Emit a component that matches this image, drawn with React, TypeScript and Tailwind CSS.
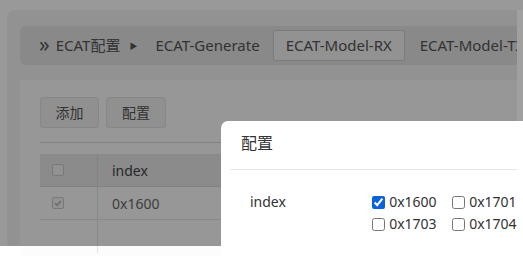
import React from 'react';

const FONT = { fontFamily: '"Noto Sans", "Noto Sans CJK SC", sans-serif' };

function Crumbs() {
  return (
    <div className="flex items-center h-[39px] bg-[#e4e4e4] rounded-l-[6px] pl-[19px] text-[15px] text-[#555] whitespace-nowrap overflow-hidden">
      <span className="text-[21px] leading-none mr-[6px] -mt-[3px]">»</span>
      <span>ECAT配置</span>
      <span className="ml-[9px] text-[8px]">▶</span>
      <span className="ml-[18px]">ECAT-Generate</span>
      <span className="ml-[13px] h-[31px] px-[12px] flex items-center bg-[#f3f3f3] border border-[#cdcdcd] rounded-[2px]">
        ECAT-Model-RX
      </span>
      <span className="ml-[15px]">ECAT-Model-TX</span>
    </div>
  );
}

function Check({ checked }: { checked?: boolean }) {
  return (
    <div className="w-[12px] h-[12px] rounded-[2px] border border-[#c8c8c8] bg-[#f4f4f4] flex items-center justify-center">
      {checked && (
        <svg viewBox="0 0 12 12" className="w-[10px] h-[10px]">
          <path d="M2.5 6.2 5 8.6 9.5 3.6" fill="none" stroke="#b0b0b0" strokeWidth="1.8" />
        </svg>
      )}
    </div>
  );
}

function Opt({ label, checked }: { label: string; checked?: boolean }) {
  return (
    <label className="flex items-center gap-[4px] w-[80px]">
      <input type="checkbox" defaultChecked={checked} className="w-[13px] h-[13px] m-0 accent-[#0a64d8]" />
      <span>{label}</span>
    </label>
  );
}

export default function App() {
  return (
    <div className="relative w-[523px] h-[256px] overflow-hidden bg-white" style={FONT}>
      {/* page under the mask */}
      <div className="h-[246px] pt-[10px] pl-[7px] bg-white">
        <div className="h-full bg-[#f3f3f3] rounded-tl-[8px] pt-[16px] pl-[13px]">
          <Crumbs />
          <div className="mt-[15px] h-full bg-[#fcfcfc] pl-[20px] pt-[17px]">
            <div className="flex gap-[7px] text-[14px] text-[#555]">
              <button className="w-[59px] h-[31px] bg-[#f0f0f0] border border-[#e2e2e2] rounded-[3px]">添加</button>
              <button className="w-[60px] h-[31px] bg-[#f0f0f0] border border-[#e2e2e2] rounded-[3px]">配置</button>
            </div>
            <div className="mt-[14px] h-px bg-[#d9d9d9]" />
            <div className="mt-[11px] text-[14px] text-[#444]">
              <div className="flex h-[33px] bg-[#e8e8e8] border-b border-[#d9d9d9]">
                <div className="w-[58px] flex items-center pl-[12px] border-r border-[#d9d9d9]">
                  <Check />
                </div>
                <div className="flex items-center pl-[14px]">index</div>
              </div>
              <div className="flex h-[33px] border-b border-[#e3e3e3] text-[#666]">
                <div className="w-[58px] flex items-center pl-[12px] border-r border-[#e3e3e3]">
                  <Check checked />
                </div>
                <div className="flex items-center pl-[14px]">0x1600</div>
              </div>
              <div className="flex h-[33px]">
                <div className="w-[58px] border-r border-[#e3e3e3]" />
              </div>
            </div>
          </div>
        </div>
      </div>

      {/* mask */}
      <div className="absolute left-0 top-0 w-[523px] h-[246px] bg-black/40" />
      <div className="absolute left-[517px] top-[10px] w-[6px] h-[111px] bg-[#a0a0a0]" />

      {/* dialog */}
      <div className="absolute left-[221px] top-[121px] w-[320px] h-[160px] bg-white rounded-tl-[7px] text-[#333]">
        <div className="pl-[20px] pt-[10px] text-[16px] h-[48px]">配置</div>
        <div className="ml-[9px] w-[287px] h-px bg-[#e8e8e8]" />
        <div className="flex pt-[22px] pl-[29px] text-[14px]">
          <div className="w-[123px] leading-[20px]">index</div>
          <div className="flex flex-wrap w-[170px] gap-y-[2px] leading-[20px]">
            <Opt label="0x1600" checked />
            <Opt label="0x1701" />
            <Opt label="0x1703" />
            <Opt label="0x1704" />
          </div>
        </div>
      </div>
    </div>
  );
}
